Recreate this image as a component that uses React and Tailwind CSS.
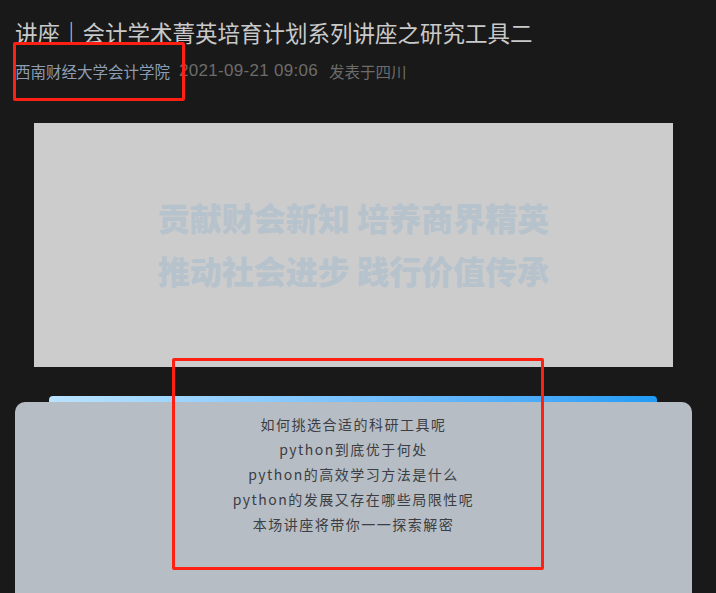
export default function App() {
  return (
    <div
      className="relative min-h-[593px] w-[716px] overflow-hidden bg-[#191919]"
      style={{ fontFamily: '"Noto Sans CJK SC", "Noto Sans", sans-serif' }}
    >
      <div className="px-[15px] pt-[16px]">
        <h1 className="text-[22.5px] leading-[32px] font-normal text-[#c9c9c9] whitespace-nowrap">
          讲座｜会计学术菁英培育计划系列讲座之研究工具二
        </h1>
        <div className="mt-[11px] flex items-center gap-[11px] text-[15.5px] leading-[24px] whitespace-nowrap">
          <span className="text-[#8d9db4]">西南财经大学会计学院</span>
          <span className="-ml-[2px] text-[17px] tracking-[0.3px] text-[#6c6c6c]" style={{ fontFamily: '"Liberation Sans", "Noto Sans CJK SC", sans-serif' }}>
            2021-09-21 09:06
          </span>
          <span className="text-[#6c6c6c]">发表于四川</span>
        </div>
      </div>

      <div className="ml-[34px] mt-[40px] flex h-[244px] w-[639px] flex-col items-center justify-center gap-[11px] bg-[#cccccc] pb-[4px]">
        <div className="text-[32px] leading-[42px] font-black text-[#b6c2cc] whitespace-nowrap">
          贡献财会新知 培养商界精英
        </div>
        <div className="text-[32px] leading-[42px] font-black text-[#b6c2cc] whitespace-nowrap">
          推动社会进步 践行价值传承
        </div>
      </div>

      <div className="mt-[29px] ml-[49px] h-[8px] w-[608px] rounded-t-[4px] bg-gradient-to-r from-[#b9e3ff] to-[#1f9cf6]" />
      <div className="-mt-[2px] ml-[15px] h-[200px] w-[677px] rounded-t-[10px] bg-[#b7bdc4] pt-[10px] text-center text-[14px] leading-[25px] tracking-[1.5px] text-[#3b3e45]">
        <p>如何挑选合适的科研工具呢</p>
        <p>python到底优于何处</p>
        <p>python的高效学习方法是什么</p>
        <p>python的发展又存在哪些局限性呢</p>
        <p>本场讲座将带你一一探索解密</p>
      </div>

      <div className="absolute left-[13px] top-[42px] h-[59px] w-[172px] rounded-[2px] border-[3px] border-[#ff2014]" />
      <div className="absolute left-[172px] top-[358px] h-[212px] w-[372px] rounded-[2px] border-[3px] border-[#ff2014]" />
    </div>
  );
}
